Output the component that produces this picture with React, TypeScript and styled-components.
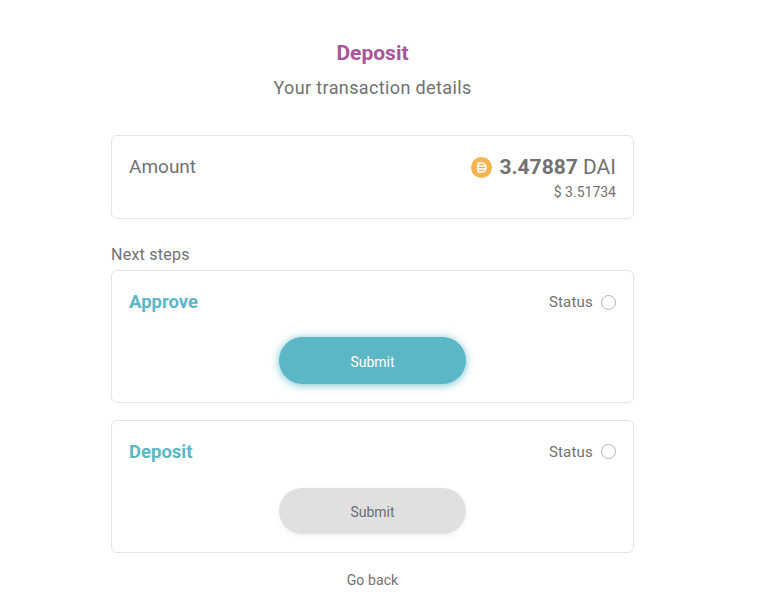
import styled, { createGlobalStyle } from "styled-components";

const GlobalStyle = createGlobalStyle`
  body {
    margin: 0;
    background: #fff;
    font-family: Roboto, "Liberation Sans", sans-serif;
    color: #727272;
  }
`;

const Wrapper = styled.div`
  width: 745px;
  height: 612px;
  overflow: hidden;
  display: flex;
  flex-direction: column;
  align-items: center;
  padding-top: 40px;
  box-sizing: border-box;
`;

const Title = styled.h1`
  margin: 0;
  font-size: 21px;
  line-height: 26px;
  font-weight: 700;
  color: #a9549c;
`;

const Subtitle = styled.h2`
  margin: 9px 0 0;
  font-size: 18px;
  line-height: 26px;
  font-weight: 400;
  letter-spacing: 0.37px;
`;

const Card = styled.div<{ $height: number }>`
  width: 523px;
  height: ${(props) => props.$height}px;
  box-sizing: border-box;
  padding: 18px 17px;
  border: 1px solid #e4e4e4;
  border-radius: 6px;
  background: #fff;
`;

const AmountCard = styled(Card)`
  margin-top: 34px;
  display: flex;
  justify-content: space-between;
  align-items: flex-start;
`;

const AmountLabel = styled.div`
  font-size: 19px;
  line-height: 26px;
`;

const AmountValues = styled.div`
  display: flex;
  flex-direction: column;
  align-items: flex-end;
`;

const AmountMain = styled.div`
  display: flex;
  align-items: center;
  gap: 7px;
  font-size: 21px;
  line-height: 28px;
  margin-top: -1px;
`;

const Strong = styled.strong`
  font-weight: 700;
`;

const Fiat = styled.div`
  font-size: 14px;
  line-height: 20px;
  margin-top: 1px;
`;

const SectionLabel = styled.div`
  width: 523px;
  margin-top: 25px;
  font-size: 16px;
  line-height: 22px;
  letter-spacing: 0.25px;
  margin-bottom: 4px;
`;

const StepCard = styled(Card)`
  display: flex;
  flex-direction: column;
  align-items: center;
  & + & {
    margin-top: 17px;
  }
`;

const StepHead = styled.div`
  width: 100%;
  display: flex;
  justify-content: space-between;
  align-items: center;
  height: 26px;
`;

const StepName = styled.div`
  font-size: 18.5px;
  font-weight: 700;
  color: #5bb6c5;
`;

const Status = styled.div`
  display: flex;
  align-items: center;
  gap: 8px;
  font-size: 15px;
  letter-spacing: 0.2px;
`;

const Radio = styled.span`
  width: 15px;
  height: 15px;
  box-sizing: border-box;
  border: 1px solid #b4b4b4;
  border-radius: 50%;
`;

const SubmitButton = styled.button<{ $active?: boolean }>`
  width: 187px;
  height: 47px;
  padding: 2px 0 0;
  margin-top: ${(props) => (props.$active ? 22 : 23)}px;
  border: none;
  border-radius: 24px;
  font-family: inherit;
  font-size: 14px;
  background: ${(props) => (props.$active ? "#5bb6c5" : "#e0e0e0")};
  color: ${(props) => (props.$active ? "#fff" : "#6d6d6d")};
  box-shadow: ${(props) =>
    props.$active
      ? "0 1px 8px rgba(91, 182, 197, 0.85)"
      : "0 2px 6px rgba(0, 0, 0, 0.06)"};
`;

const GoBack = styled.div`
  margin-top: 17px;
  font-size: 14px;
  line-height: 20px;
  letter-spacing: 0.1px;
`;

function DaiIcon() {
  return (
    <svg width="21" height="21" viewBox="0 0 21 21" aria-hidden="true">
      <circle cx="10.5" cy="10.5" r="10.5" fill="#f4b54f" />
      <path
        d="M7.2 6h3.6a4.5 4.5 0 0 1 0 9H7.2zM5.6 9h9.8M5.6 12h9.8"
        fill="none"
        stroke="#fff"
        strokeWidth="1.3"
      />
    </svg>
  );
}

function Step({ name, active }: { name: string; active?: boolean }) {
  return (
    <StepCard $height={133}>
      <StepHead>
        <StepName>{name}</StepName>
        <Status>
          Status
          <Radio />
        </Status>
      </StepHead>
      <SubmitButton $active={active}>Submit</SubmitButton>
    </StepCard>
  );
}

function App() {
  return (
    <Wrapper>
      <GlobalStyle />
      <Title>Deposit</Title>
      <Subtitle>Your transaction details</Subtitle>
      <AmountCard $height={84}>
        <AmountLabel>Amount</AmountLabel>
        <AmountValues>
          <AmountMain>
            <DaiIcon />
            <span>
              <Strong>3.47887</Strong> DAI
            </span>
          </AmountMain>
          <Fiat>$ 3.51734</Fiat>
        </AmountValues>
      </AmountCard>
      <SectionLabel>Next steps</SectionLabel>
      <Step name="Approve" active />
      <Step name="Deposit" />
      <GoBack>Go back</GoBack>
    </Wrapper>
  );
}

export default App;
